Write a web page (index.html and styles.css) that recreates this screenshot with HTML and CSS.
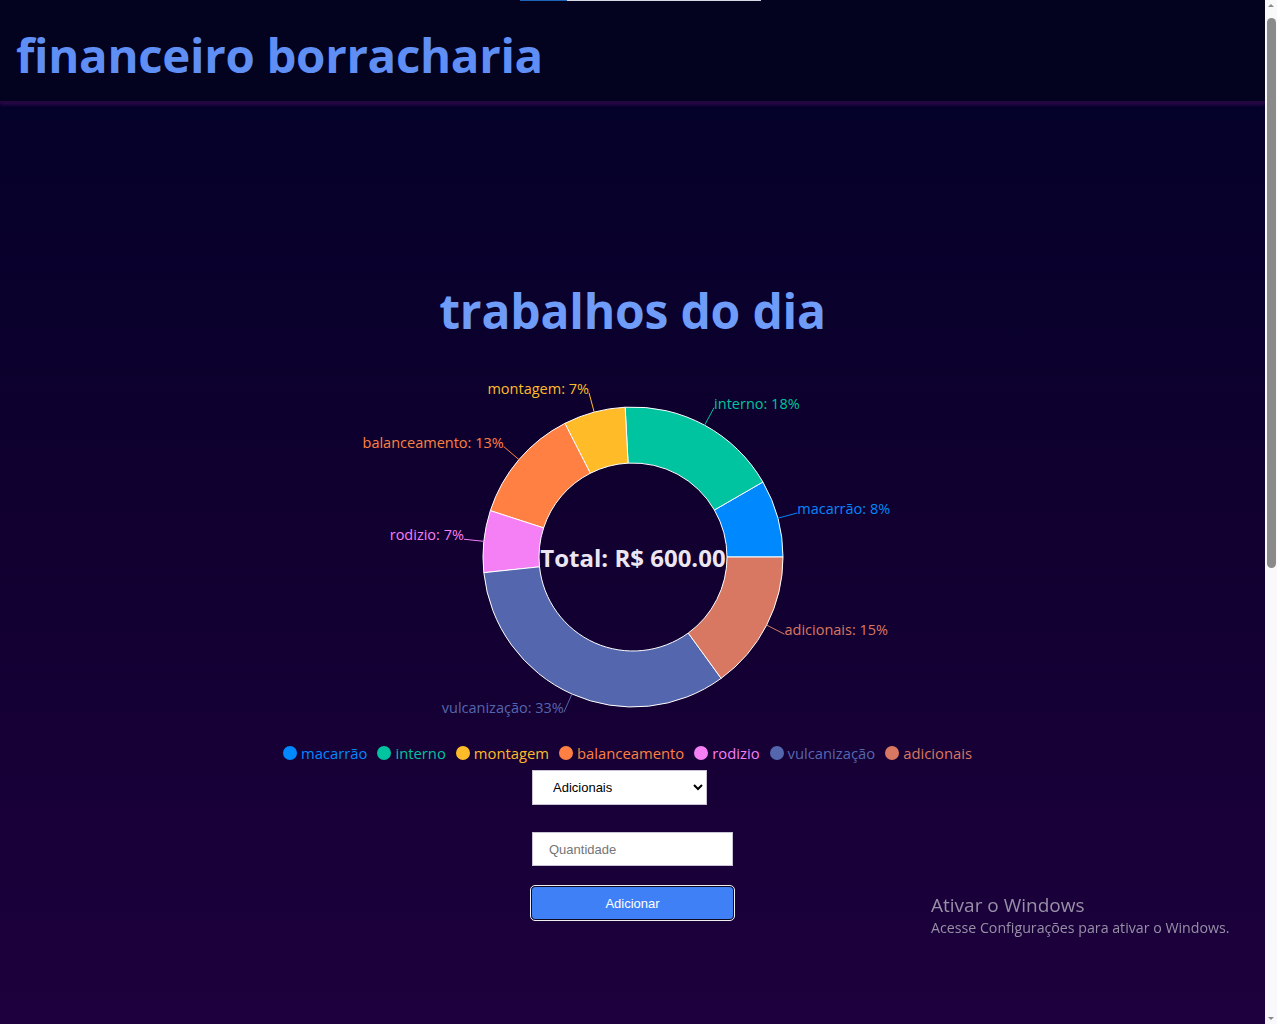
FILE: index.html
```html
<!DOCTYPE html>
<html lang="pt-BR">
<head>
<meta charset="utf-8">
<title>financeiro borracharia</title>
<link rel="stylesheet" href="styles.css">
</head>
<body>
<div class="topbar"><span class="topbar-blue"></span><span class="topbar-white"></span></div>
<div class="app">
  <header class="header">
    <h1 class="brand">financeiro borracharia</h1>
  </header>
  <main class="main">
    <h2 class="section-title">trabalhos do dia</h2>
    <div class="chart">
      <svg class="pie" width="700" height="374" viewBox="0 0 700 374">
        <g class="sectors" stroke="#ffffff" stroke-width="1">
          <path fill="#0088FE" d="M500,190 A150,150 0 0 0 479.90,115 L431.40,143 A94,94 0 0 1 444,190 Z"/>
          <path fill="#00C49F" d="M479.90,115 A150,150 0 0 0 342.15,40.21 L345.08,96.13 A94,94 0 0 1 431.40,143 Z"/>
          <path fill="#FFBB28" d="M342.15,40.21 A150,150 0 0 0 281.90,56.35 L307.32,106.24 A94,94 0 0 1 345.08,96.13 Z"/>
          <path fill="#FF8042" d="M281.90,56.35 A150,150 0 0 0 207.34,143.65 L260.60,160.95 A94,94 0 0 1 307.32,106.24 Z"/>
          <path fill="#F57FF5" d="M207.34,143.65 A150,150 0 0 0 200.82,205.68 L256.52,199.83 A94,94 0 0 1 260.60,160.95 Z"/>
          <path fill="#5467AE" d="M200.82,205.68 A150,150 0 0 0 438.17,311.35 L405.25,266.05 A94,94 0 0 1 256.52,199.83 Z"/>
          <path fill="#D97862" d="M438.17,311.35 A150,150 0 0 0 500,190 L444,190 A94,94 0 0 1 405.25,266.05 Z"/>
        </g>
        <g class="label-lines" fill="none" stroke-width="1">
          <path stroke="#0088FE" d="M494.89,151.18 L514.21,146"/>
          <path stroke="#00C49F" d="M421.57,58.18 L431.12,40.6"/>
          <path stroke="#FFBB28" d="M311.18,45.11 L306,25.79"/>
          <path stroke="#FF8042" d="M235.94,92.58 L220.73,79.59"/>
          <path stroke="#F57FF5" d="M200.82,174.32 L180.93,172.23"/>
          <path stroke="#5467AE" d="M288.99,327.03 L280.85,345.3"/>
          <path stroke="#D97862" d="M483.65,258.1 L501.47,267.18"/>
        </g>
        <g class="labels">
          <text class="lbl" fill="#0088FE" x="514.21" y="141" text-anchor="start">macarrão: 8%</text>
          <text class="lbl" fill="#00C49F" x="431.12" y="36" text-anchor="start">interno: 18%</text>
          <text class="lbl" fill="#FFBB28" x="306" y="21" text-anchor="end">montagem: 7%</text>
          <text class="lbl" fill="#FF8042" x="220.73" y="75" text-anchor="end">balanceamento: 13%</text>
          <text class="lbl" fill="#F57FF5" x="180.93" y="167" text-anchor="end">rodizio: 7%</text>
          <text class="lbl" fill="#5467AE" x="280.85" y="340" text-anchor="end">vulcanização: 33%</text>
          <text class="lbl" fill="#D97862" x="501.47" y="262" text-anchor="start">adicionais: 15%</text>
        </g>
        <text class="total" x="350" y="190" text-anchor="middle">Total: R$ 600.00</text>
      </svg>
      <ul class="legend">
        <li class="legend-item c1"><span class="dot"></span>macarrão</li>
        <li class="legend-item c2"><span class="dot"></span>interno</li>
        <li class="legend-item c3"><span class="dot"></span>montagem</li>
        <li class="legend-item c4"><span class="dot"></span>balanceamento</li>
        <li class="legend-item c5"><span class="dot"></span>rodizio</li>
        <li class="legend-item c6"><span class="dot"></span>vulcanização</li>
        <li class="legend-item c7"><span class="dot"></span>adicionais</li>
      </ul>
    </div>
    <form class="form">
      <select class="field select">
        <option>Adicionais</option>
        <option>macarrão</option>
        <option>interno</option>
        <option>montagem</option>
        <option>balanceamento</option>
        <option>rodizio</option>
        <option>vulcanização</option>
      </select>
      <input class="field input" type="text" placeholder="Quantidade">
      <button class="btn" type="button">Adicionar</button>
    </form>
  </main>
</div>
<div class="watermark">
  <div class="wm-title">Ativar o Windows</div>
  <div class="wm-sub">Acesse Configurações para ativar o Windows.</div>
</div>
<div class="scrollbar">
  <span class="sb-arrow sb-up"></span>
  <span class="sb-thumb"></span>
  <span class="sb-arrow sb-down"></span>
</div>
</body>
</html>
```
FILE: styles.css
```css
html, body {
  margin: 0;
  padding: 0;
  height: 1024px;
  overflow: hidden;
}
body {
  font-family: "Open Sans", "Noto Sans", sans-serif;
  background: linear-gradient(180deg, #03021f 0px, #04012a 110px, #10002f 500px, #1d003d 1024px);
}
.app {
  margin-right: 12px;
  height: 1024px;
  display: flex;
  flex-direction: column;
}
.topbar {
  position: absolute;
  top: 0;
  left: 520px;
  display: flex;
  height: 1px;
  z-index: 5;
}
.topbar-blue { width: 47px; background: #1f63b8; }
.topbar-white { width: 194px; background: #d9d9e6; }

.header {
  height: 101px;
  background: #03021f;
  box-shadow: 0 2px 3px #2a0848;
  border-bottom: 2px solid #230640;
  display: flex;
  align-items: center;
  padding-left: 16px;
}
.brand {
  margin: 0;
  font-size: 47.4px;
  font-weight: 700;
  color: #5f8ff5;
  letter-spacing: -0.3px;
  line-height: 1;
  padding-top: 8px;
}
.main {
  display: flex;
  flex-direction: column;
  align-items: center;
}
.section-title {
  margin: 178px 0 0;
  font-size: 48px;
  font-weight: 700;
  color: #6e9cf8;
  letter-spacing: -0.2px;
  line-height: 60px;
}
.chart {
  margin-top: 26px;
  display: flex;
  flex-direction: column;
  align-items: center;
}
.pie { display: block; }
.lbl {
  font-family: "Open Sans", sans-serif;
  font-size: 14.5px;
  dominant-baseline: central;
}
.total {
  font-family: "Open Sans", sans-serif;
  font-size: 24px;
  font-weight: 700;
  fill: #ece6f2;
  dominant-baseline: central;
}
.legend {
  list-style: none;
  margin: 0;
  padding: 0;
  display: flex;
  height: 24px;
  align-items: center;
  font-size: 14.8px;
}
.legend-item {
  display: flex;
  align-items: center;
  margin-right: 10px;
}
.legend-item:last-child { margin-right: 0; padding-right: 10px; }
.dot {
  width: 14px;
  height: 14px;
  border-radius: 50%;
  margin-right: 4px;
  background: currentColor;
}
.c1 { color: #0088FE; }
.c2 { color: #00C49F; }
.c3 { color: #FFBB28; }
.c4 { color: #FF8042; }
.c5 { color: #F57FF5; }
.c6 { color: #5467AE; }
.c7 { color: #D97862; }

.form {
  display: flex;
  flex-direction: column;
  align-items: center;
  margin-top: 5px;
}
.field {
  box-sizing: border-box;
  background: #ffffff;
  border: 1px solid #c9c3d6;
  font-family: "Liberation Sans", Arial, sans-serif;
  font-size: 13px;
  color: #000;
  border-radius: 0;
  outline: none;
}
.select {
  width: 175px;
  height: 35px;
  padding: 0 8px 0 16px;
  margin-right: 26px;
}
.input {
  width: 201px;
  height: 34px;
  margin-top: 27px;
  padding: 0 16px;
}
.input::placeholder { color: #757575; }
.btn {
  box-sizing: border-box;
  width: 203px;
  height: 34px;
  margin-top: 20px;
  background: #4080f6;
  color: #ffffff;
  border: 1px solid #0f0a1e;
  outline: 1px solid #f0f0f0;
  border-radius: 4px;
  font-family: "Liberation Sans", Arial, sans-serif;
  font-size: 13px;
}

.watermark {
  position: fixed;
  left: 931px;
  top: 892px;
  color: #9790a6;
  font-family: "Open Sans", sans-serif;
}
.wm-title { font-size: 19px; line-height: 26px; }
.wm-sub { font-size: 14.2px; line-height: 20px; }

.scrollbar {
  position: fixed;
  top: 0;
  right: 0;
  width: 12px;
  height: 1024px;
  background: #f9f9fb;
}
.sb-thumb {
  position: absolute;
  left: 2px;
  top: 18px;
  width: 9px;
  height: 550px;
  background: #8a8a8a;
  border-radius: 5px;
}
.sb-arrow {
  position: absolute;
  left: 3px;
  width: 0;
  height: 0;
  border-left: 3px solid transparent;
  border-right: 3px solid transparent;
}
.sb-up { top: 4px; border-bottom: 3px solid #8a8a8a; }
.sb-down { bottom: 4px; border-top: 3px solid #8a8a8a; }
```
